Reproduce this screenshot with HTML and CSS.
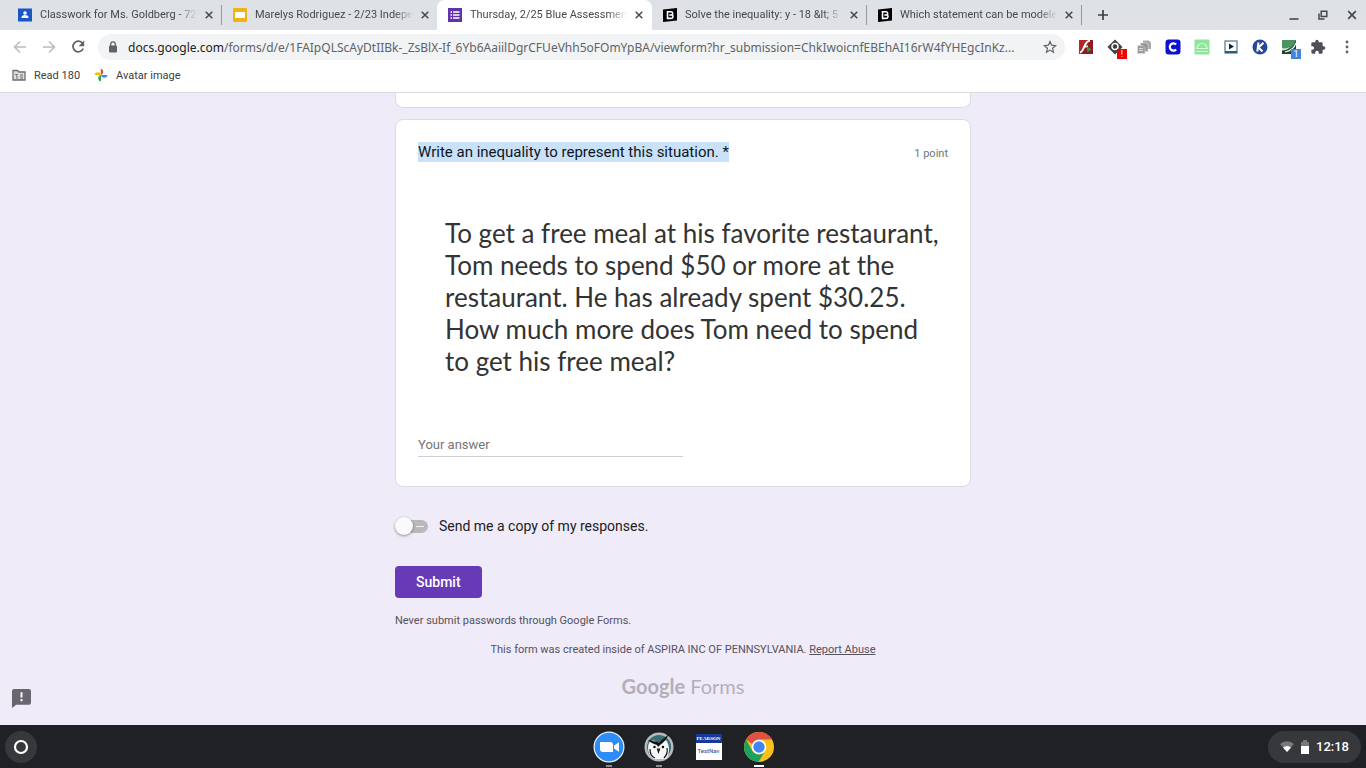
FILE: index.html
```html
<!DOCTYPE html>
<html lang="en">

<head>
    <meta charset="UTF-8">
    <meta name="viewport" content="width=device-width, initial-scale=1.0">
    <title>Thursday, 2/25 Blue Assessment</title>
    <link rel="stylesheet" href="styles.css">
</head>

<body>
    <header>
        <!-- tabs -->
        <div class="tabs">
            <div class="tab">
                <svg class="favicon" viewBox="0 0 14 14"><rect width="14" height="13" y="0.5" fill="#1a56c4"/><circle cx="7" cy="5" r="1.8" fill="#fff"/><path d="M3.5 10V9c0-1.200 2-2 3.500-2s3.500.8 3.500 2v1z" fill="#fff"/></svg>
                <span class="title">Classwork for Ms. Goldberg - 72</span>
                <button class="close" aria-label="Close tab"><svg viewBox="0 0 8 8"><path d="M.7.7l6.600 6.600M7.300.7L.7 7.300"/></svg></button>
            </div>
            <div class="tab last">
                <svg class="favicon" viewBox="0 0 14 14"><rect width="14" height="14" rx="1" fill="#f0b412"/><rect x="2" y="4" width="10" height="6" fill="#fff"/></svg>
                <span class="title">Marelys Rodriguez - 2/23 Indepe</span>
                <button class="close" aria-label="Close tab"><svg viewBox="0 0 8 8"><path d="M.7.7l6.600 6.600M7.300.7L.7 7.300"/></svg></button>
            </div>
            <div class="tab active">
                <svg class="favicon" viewBox="0 0 14 14"><rect width="14" height="14" fill="#5e35a8"/><path d="M5 4h6.500M5 7h6.500M5 10h6.500M2.500 4h1.500M2.500 7h1.500M2.500 10h1.500" stroke="#fff" stroke-width="1.500"/></svg>
                <span class="title">Thursday, 2/25 Blue Assessmen</span>
                <button class="close" aria-label="Close tab"><svg viewBox="0 0 8 8"><path d="M.7.7l6.600 6.600M7.300.7L.7 7.300"/></svg></button>
            </div>
            <div class="tab">
                <svg class="favicon" viewBox="0 0 14 14"><path d="M0 1.500L14 0v12.500L0 14z" fill="#000"/><path d="M4.500 3.700h3.300c2.400 0 2.400 2.700.9 3.200 2 .5 1.700 3.500-.9 3.500H4.500zM4 10.400h2M4 3.700h2M6.200 7h2" fill="none" stroke="#fff" stroke-width="1.600"/></svg>
                <span class="title">Solve the inequality: y - 18 &amp;lt; 5</span>
                <button class="close" aria-label="Close tab"><svg viewBox="0 0 8 8"><path d="M.7.7l6.600 6.600M7.300.7L.7 7.300"/></svg></button>
            </div>
            <div class="tab">
                <svg class="favicon" viewBox="0 0 14 14"><path d="M0 1.500L14 0v12.500L0 14z" fill="#000"/><path d="M4.500 3.700h3.300c2.400 0 2.400 2.700.9 3.200 2 .5 1.700 3.500-.9 3.500H4.500zM4 10.400h2M4 3.700h2M6.200 7h2" fill="none" stroke="#fff" stroke-width="1.600"/></svg>
                <span class="title">Which statement can be modele</span>
                <button class="close" aria-label="Close tab"><svg viewBox="0 0 8 8"><path d="M.7.7l6.600 6.600M7.300.7L.7 7.300"/></svg></button>
            </div>
            <button class="new-tab" aria-label="New tab"><svg viewBox="0 0 12 12"><path d="M6 1v10M1 6h10" stroke="#3c4043" stroke-width="1.700"/></svg></button>
            <div class="window-buttons">
                <button aria-label="Minimize"><svg viewBox="0 0 10 10"><path d="M.5 9h9" stroke="#45494d" stroke-width="1.600"/></svg></button>
                <button aria-label="Restore"><svg viewBox="0 0 10 10"><path d="M3.200 1.200h5.600v5.300H3.200zM1 3.500V9h5.500" fill="none" stroke="#45494d" stroke-width="1.500"/></svg></button>
                <button aria-label="Close"><svg viewBox="0 0 10 10"><path d="M1.200 1.200l7.600 7.600M8.800 1.200L1.200 8.800" stroke="#45494d" stroke-width="1.700"/></svg></button>
            </div>
        </div>

        <!-- toolbar -->
        <div class="toolbar">
            <button class="tool" aria-label="Back"><svg viewBox="0 0 16 16"><path d="M14 8H3M8 2.500L2.500 8 8 13.500" fill="none" stroke="#b9bbbd" stroke-width="1.500"/></svg></button>
            <button class="tool" aria-label="Forward"><svg viewBox="0 0 16 16"><path d="M2 8h11M8 2.500L13.500 8 8 13.500" fill="none" stroke="#b9bbbd" stroke-width="1.500"/></svg></button>
            <button class="tool" aria-label="Reload"><svg viewBox="0 0 16 16"><path d="M12.600 4.400A5.300 5.300 0 1 0 13.200 9.500" fill="none" stroke="#5f6368" stroke-width="1.700"/><path d="M14.200 1.500v5.700H8.500z" fill="#5f6368"/></svg></button>
            <div class="omnibox">
                <svg class="lock" viewBox="0 0 10 12"><rect x="1" y="4.500" width="8" height="7" rx="1" fill="#5f6368"/><path d="M2.700 5V3.200a2.300 2.300 0 0 1 4.600 0V5" fill="none" stroke="#5f6368" stroke-width="1.300"/></svg>
                <span class="url"><b>docs.google.com</b>/forms/d/e/1FAIpQLScAyDtIIBk-_ZsBlX-If_6Yb6AaiilDgrCFUeVhh5oFOmYpBA/viewform?hr_submission=ChkIwoicnfEBEhAI16rW4fYHEgcInKz...</span>
                <button class="star" aria-label="Bookmark this page"><svg viewBox="0 0 14 14"><path d="M7 1.500l1.600 3.700 4 .4-3 2.700.9 3.900L7 10.100l-3.500 2.100.9-3.900-3-2.700 4-.4z" fill="none" stroke="#5f6368" stroke-width="1.200"/></svg></button>
            </div>
            <div class="extensions">
                <button class="tool" aria-label="Flash"><svg viewBox="0 0 16 16"><rect x="1" y="1" width="14" height="14" fill="#8f1a20"/><path d="M1 1h9L6 9l-3 6H1z" fill="#b5262b"/><path d="M12 1.500C8 2 7 6 5.500 9.500 4.700 11.500 4 13 2 13.500M6.500 7.500H10" fill="none" stroke="#fff" stroke-width="2"/><path d="M8.500 7l5 3.500-4 2.500z" fill="#32a04a"/></svg></button>
                <button class="tool" aria-label="Extension with alert"><svg viewBox="0 0 16 16"><path d="M8 .5L15.500 8 8 15.500.5 8z" fill="#3c4043"/><circle cx="8" cy="7.500" r="3" fill="none" stroke="#fff" stroke-width="1.500"/></svg><span class="badge red">!</span></button>
                <button class="tool" aria-label="Copy"><svg viewBox="0 0 16 16"><path d="M7 1.500h6l2 2V10H7z" fill="#aaa"/><path d="M4.500 4H10l2 2v6.500H4.500z" fill="#929292" stroke="#ddd" stroke-width=".6"/><path d="M1.500 6.500H7l2 2v6H1.500z" fill="#9b9b9b" stroke="#ddd" stroke-width=".6"/><path d="M3 9.500h4M3 11.500h4" stroke="#ddd"/></svg></button>
                <button class="tool" aria-label="Clever"><svg viewBox="0 0 16 16"><rect x=".5" y=".5" width="15" height="15" rx="3" fill="#1010cf"/><path d="M11.100 5.600A3.600 3.600 0 1 0 11.100 10.400" fill="none" stroke="#fff" stroke-width="2.200"/></svg></button>
                <button class="tool" aria-label="Screen tool"><svg viewBox="0 0 16 16"><rect x=".5" y=".5" width="15" height="15" rx="1" fill="#8ee59b"/><path d="M3 9.500a5 5 0 0 1 10 0M2 9.500h12M2 12.500h12" fill="none" stroke="#d6f8db" stroke-width="1.200"/></svg></button>
                <button class="tool" aria-label="Video"><svg viewBox="0 0 16 16"><rect x="2" y="2" width="12" height="12" fill="#fff" stroke="#4a7596" stroke-width="1.200"/><path d="M2 13h12" stroke="#285d82" stroke-width="2"/><path d="M6 4.500l5 3-5 3z" fill="#17222c"/></svg></button>
                <button class="tool" aria-label="Kami"><svg viewBox="0 0 16 16"><circle cx="8" cy="8" r="7.500" fill="#27479d"/><path d="M6.500 3.500l-1.200 9M11.500 3.800L6.500 8.500l4 4" fill="none" stroke="#fff" stroke-width="2"/></svg></button>
                <button class="tool" aria-label="Extension with count"><svg viewBox="0 0 16 16"><rect x="1" y="1" width="14" height="14" fill="#4b9360"/><path d="M1 9c3 1 6 0 8-1l-8 7z" fill="#d6e6da"/><path d="M15 1C13 8 8 11 1 11.500V15h14z" fill="#263d33"/><path d="M15 4c-2 6-6 8-11 9" fill="none" stroke="#dfe" stroke-width="1.200"/></svg><span class="badge blue">1</span></button>
                <button class="tool" aria-label="Extensions"><svg viewBox="0 0 24 24"><path d="M20.500 11H19V7a2 2 0 0 0-2-2h-4V3.500a2.500 2.500 0 0 0-5 0V5H4a2 2 0 0 0-2 2v3.800h1.500a2.700 2.700 0 0 1 0 5.400H2V20a2 2 0 0 0 2 2h3.800v-1.500a2.700 2.700 0 0 1 5.400 0V22H17a2 2 0 0 0 2-2v-4h1.500a2.500 2.500 0 0 0 0-5z" fill="#4d5156"/></svg></button>
                <button class="tool" aria-label="Menu"><svg viewBox="0 0 16 16" fill="#5f6368"><circle cx="8" cy="3" r="1.400"/><circle cx="8" cy="8" r="1.400"/><circle cx="8" cy="13" r="1.400"/></svg></button>
            </div>
        </div>

        <!-- bookmarks -->
        <nav class="bookmarks">
            <a href="#"><svg viewBox="0 0 14 14"><path d="M1 2.500h4.500L7 4h6v8H1z" fill="#ddd" stroke="#6b6f73" stroke-width="1.300"/><path d="M3 6.500h3M4 8h1v3M8 7h3M8 9h3M8 11h3" stroke="#6b6f73" fill="none"/></svg>Read 180</a>
            <a href="#"><svg viewBox="0 0 14 14"><path d="M6.800 7V.5a3.400 3.400 0 0 1 0 6.500z" fill="#ea4335"/><path d="M7 7h6.500a3.300 3.300 0 0 1-6.500 0z" fill="#4285f4"/><path d="M7 7v6.500A3.300 3.300 0 0 1 7 7z" fill="#34a853"/><path d="M7 7H.5A3.300 3.300 0 0 1 7 7z" fill="#fbbc04"/></svg>Avatar image</a>
        </nav>
    </header>

    <main>
        <form class="form" onsubmit="return false">
            <div class="card previous"></div>
            <div class="card">
                <div class="question">
                    <label for="answer">Write an inequality to represent this situation. *</label>
                    <span class="points">1 point</span>
                </div>
                <p class="problem">To get a free meal at his favorite restaurant,<br>
                    Tom needs to spend $50 or more at the<br>
                    restaurant. He has already spent $30.25.<br>
                    How much more does Tom need to spend<br>
                    to get his free meal?</p>
                <input class="answer" id="answer" type="text" placeholder="Your answer">
            </div>
            <div class="copy">
                <input class="switch" id="copy" type="checkbox">
                <label for="copy">Send me a copy of my responses.</label>
            </div>
            <button class="submit" type="submit">Submit</button>
            <p class="never">Never submit passwords through Google Forms.</p>
            <p class="created">This form was created inside of ASPIRA INC OF PENNSYLVANIA. <a href="#">Report Abuse</a></p>
            <div class="logo"><b>Google</b> Forms</div>
        </form>
        <button class="feedback" aria-label="Report a problem"><svg viewBox="0 0 18 18"><path d="M2 0h14a2 2 0 0 1 2 2v11a2 2 0 0 1-2 2H4l-4 3V2a2 2 0 0 1 2-2z" fill="#6a6670"/><path d="M9 3v5M9 9.500v2" stroke="#fff" stroke-width="1.800"/></svg></button>
    </main>

    <footer>
        <button class="launcher" aria-label="Launcher"><svg viewBox="0 0 16 16"><circle cx="8" cy="8" r="6" fill="none" stroke="#fff" stroke-width="2.200"/></svg></button>
        <div class="apps">
            <button class="app running" aria-label="Zoom"><svg viewBox="0 0 32 32"><circle cx="16" cy="16" r="15.500" fill="#e8f1fd"/><circle cx="16" cy="16" r="14.300" fill="#2d8cf5"/><path d="M7 11h10a3 3 0 0 1 3 3v7H10a3 3 0 0 1-3-3zM21 14.500l5-3.300v9.600l-5-3.300z" fill="#fff"/></svg></button>
            <button class="app running" aria-label="Secure browser"><svg viewBox="0 0 32 32"><circle cx="16" cy="16" r="14.500" fill="#b4bcc0"/><circle cx="16" cy="16" r="12" fill="#3b6d74"/><path d="M6 12c1-2 4-3 6-2l4 4 7-5c4 5 4 14 0 19H11C5 24 4 17 6 12z" fill="#f5f7f7"/><path d="M5 9c3 3 6 4 9 5l1 2 2-2c3-2 6-5 9-11-3 3-7 5-10 9-3-2-7-2-11-3z" fill="#111"/><circle cx="11.500" cy="16" r="1.200"/><circle cx="20" cy="16" r="1.200"/><path d="M14.500 18h2l-1 3zM7 18c0 5 2 8 5 9M24 17c1 5-1 8-3 10" fill="none" stroke="#111" stroke-width="1.200"/></svg></button>
            <button class="app testnav" aria-label="TestNav"><span class="pearson">PEARSON</span><span class="nav">TestNav</span></button>
            <button class="app running current" aria-label="Chrome"><svg viewBox="0 0 32 32"><circle cx="16" cy="16" r="15" fill="#fbc116"/><path d="M3 8.500A15 15 0 0 1 29 8.500H16a7.500 7.500 0 0 0-6.800 4.500z" fill="#de5246"/><path d="M3 8.500A15 15 0 0 0 15.500 31L22 20a7.300 7.300 0 0 1-12.500 0z" fill="#1da160"/><circle cx="16" cy="16" r="7.300" fill="#fff"/><circle cx="16" cy="16" r="5.700" fill="#4285f4"/></svg></button>
        </div>
        <button class="status">
            <svg viewBox="0 0 14 14"><path d="M0 4a10.500 10.500 0 0 1 14 0L7 12z" fill="#77797c"/><path d="M3 7.500a6 6 0 0 1 8 0L7 12z" fill="#fff"/></svg>
            <svg viewBox="0 0 14 14"><path d="M5 0h4v2h2v5H3V2h2z" fill="#77797c"/><path d="M3 6h8v8H3z" fill="#fff"/></svg>
            12:18
        </button>
    </footer>
</body>

</html>
```
FILE: styles.css
```css
html,
body {
    margin: 0px;
    padding: 0px;
    height: 100%;
}

body {
    display: flex;
    flex-direction: column;
    background-color: #f0ebf8;
    color: #202124;
    font-family: Roboto, sans-serif;
    font-size: 12px;
}

button {
    padding: 0px;
    border: none;
    background: none;
    font-family: inherit;
    cursor: pointer;
}

svg {
    display: block;
    flex: none;
}

p {
    margin: 0px;
}

header {
    background-color: white;
    border-bottom: 1px solid #dadce0;
}

/* tabs */
.tabs {
    display: flex;
    align-items: center;
    height: 30px;
    padding-left: 7px;
    background-color: #dee1e6;
}

.tab {
    display: flex;
    align-items: center;
    box-sizing: border-box;
    width: 215px;
    height: 20px;
    padding: 0px 8px 0px 11px;
    border-right: 1px solid #94979b;
    color: #45494d;
}

.tab.last {
    border-color: transparent;
}

.tab.active {
    height: 30px;
    border-color: white;
    border-radius: 8px 8px 0px 0px;
    background-color: white;
}

.favicon {
    width: 14px;
    height: 14px;
    margin-right: 8px;
}

.title {
    flex: 1;
    white-space: nowrap;
    font-size: 11px;
    line-height: 16px;
    mask-image: linear-gradient(to right, black 88%, transparent);
}

.close {
    width: 8px;
    height: 8px;
    margin-left: 8px;
}

.close svg {
    width: 8px;
    height: 8px;
    stroke: #45494d;
    stroke-width: 1.5;
}

.new-tab {
    margin-left: 15px;
}

.new-tab svg {
    width: 12px;
    height: 12px;
}

.window-buttons {
    display: flex;
    gap: 19px;
    margin-left: auto;
    margin-right: 9px;
}

.window-buttons svg {
    width: 10px;
    height: 10px;
}

/* toolbar */
.toolbar {
    display: flex;
    align-items: center;
    height: 34px;
    padding: 0px 5px;
}

.tool {
    position: relative;
    width: 29px;
    height: 16px;
}

.tool svg {
    width: 16px;
    height: 16px;
    margin: 0px auto;
}

.omnibox {
    display: flex;
    flex: 1;
    align-items: center;
    min-width: 0px;
    height: 26px;
    margin: 0px 6px;
    padding: 0px 8px 0px 10px;
    border-radius: 13px;
    background-color: #f1f3f4;
}

.lock {
    width: 10px;
    height: 12px;
    margin-right: 10px;
}

.url {
    flex: 1;
    overflow: hidden;
    white-space: nowrap;
    color: #5f6368;
    font-family: "Noto Sans", sans-serif;
    font-size: 12px;
}

.url b {
    color: #202124;
    font-weight: normal;
}

.star svg {
    width: 14px;
    height: 14px;
}

.extensions {
    display: flex;
}

.badge {
    position: absolute;
    right: 2px;
    bottom: -4px;
    width: 10px;
    height: 10px;
    color: white;
    font-size: 9px;
    line-height: 10px;
}

.red {
    background-color: #f00000;
}

.blue {
    background-color: #4285dc;
}

/* bookmarks */
.bookmarks {
    display: flex;
    gap: 14px;
    height: 28px;
    padding-left: 12px;
}

.bookmarks a {
    display: flex;
    gap: 8px;
    align-items: center;
    height: 22px;
    color: #3c4043;
    font-size: 11px;
    text-decoration: none;
}

.bookmarks svg {
    width: 14px;
    height: 14px;
}

/* form */
main {
    position: relative;
    flex: 1;
    overflow: hidden;
}

.form {
    width: 576px;
    max-width: 100%;
    margin: 0px auto;
}

.card {
    box-sizing: border-box;
    padding: 22px 22px 29px;
    border: 1px solid #dadce0;
    border-radius: 8px;
    background-color: white;
}

.card.previous {
    margin-bottom: 11px;
    padding: 14px 0px 0px;
    border-top: none;
    border-radius: 0px 0px 8px 8px;
}

.question {
    display: flex;
    justify-content: space-between;
    align-items: baseline;
    line-height: 20px;
}

.question label {
    background-color: #c9e1f9;
    color: #10151c;
    font-size: 15px;
}

.points {
    color: #70757a;
    font-size: 11px;
}

.problem {
    padding: 53px 0px 56px 27px;
    color: #333333;
    font-family: Lato, sans-serif;
    font-size: 26px;
    line-height: 32px;
    white-space: nowrap;
}

.answer {
    display: block;
    box-sizing: border-box;
    width: 50%;
    height: 24px;
    padding: 0px;
    border: none;
    border-bottom: 1px solid #d0d0d4;
    outline: none;
    font-family: inherit;
    font-size: 13px;
}

.answer::placeholder {
    color: #757575;
}

.copy {
    display: flex;
    align-items: center;
    gap: 11px;
    height: 20px;
    margin-top: 29px;
    font-size: 14px;
}

/* toggle */
.switch {
    position: relative;
    appearance: none;
    width: 30px;
    height: 13px;
    margin: 0px 0px 0px 3px;
    border-radius: 7px;
    background: linear-gradient(#f0f0f0, #f0f0f0) 18px 6px / 8px 1px no-repeat #b9b8bb;
    cursor: pointer;
}

.switch::before {
    content: "";
    position: absolute;
    top: -3px;
    left: -3px;
    width: 18px;
    height: 18px;
    border-radius: 50%;
    background-color: #fafafa;
    box-shadow: 0px 1px 3px rgba(0, 0, 0, 0.4);
}

.switch:checked {
    background-color: #b39ddb;
}

.switch:checked::before {
    left: 14px;
    background-color: #673ab7;
}

.submit {
    display: block;
    height: 32px;
    margin: 30px 0px 15px;
    padding: 0px 21px;
    border-radius: 4px;
    background-color: #673ab7;
    color: white;
    font-size: 14px;
    font-weight: 500;
}

.never,
.created {
    margin-bottom: 13px;
    color: #55515d;
    font-size: 11px;
    line-height: 16px;
}

.created {
    text-align: center;
}

.created a {
    color: inherit;
}

.logo {
    margin-top: 16px;
    color: #b3afba;
    font-family: Lato, sans-serif;
    font-size: 20px;
    line-height: 24px;
    text-align: center;
}

.feedback {
    position: absolute;
    left: 12px;
    bottom: 17px;
}

.feedback svg {
    width: 19px;
    height: 19px;
}

/* shelf */
footer {
    display: flex;
    align-items: center;
    justify-content: space-between;
    height: 43px;
    background-color: #202124;
}

.launcher {
    width: 32px;
    height: 32px;
    margin-left: 5px;
    border-radius: 50%;
    background-color: #37383b;
}

.launcher svg {
    width: 16px;
    height: 16px;
    margin: 0px auto;
}

.apps {
    display: flex;
    flex: 1;
    justify-content: center;
    gap: 18px;
    padding-left: 62px;
}

.app {
    position: relative;
    width: 32px;
    height: 32px;
}

.running::after {
    content: "";
    position: absolute;
    left: 13px;
    bottom: -4px;
    width: 6px;
    height: 2px;
    background-color: #8a8b8d;
}

.current::after {
    left: 11px;
    width: 10px;
    background-color: white;
}

.testnav {
    display: flex;
    flex-direction: column;
    align-items: stretch;
    width: 26px;
    height: 26px;
    margin: 3px;
    background-color: white;
    color: #24417f;
    font-size: 6px;
}

.pearson {
    background-color: #14389b;
    color: white;
    font-family: "Liberation Serif", serif;
    font-size: 5px;
    font-weight: bold;
    line-height: 9px;
}

.nav {
    line-height: 15px;
}

.status {
    display: flex;
    align-items: center;
    gap: 4px;
    height: 32px;
    margin-right: 5px;
    padding: 0px 12px;
    border-radius: 16px;
    background-color: #37383b;
    color: white;
    font-size: 13px;
    font-weight: 500;
}

.status svg {
    width: 14px;
    height: 14px;
}
```
